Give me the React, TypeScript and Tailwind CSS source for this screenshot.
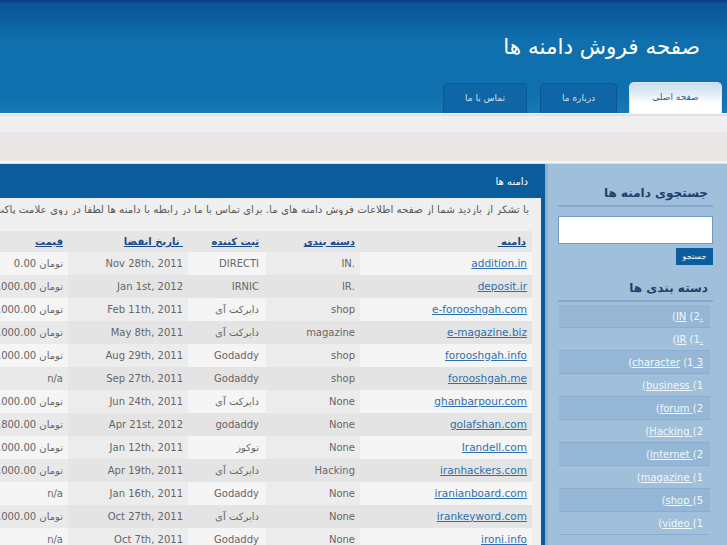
import React from "react";

type Row = [string, string, string, string, string];

const rows: Row[] = [
  ["addition.in", ".IN", "DIRECTI", "Nov 28th, 2011", "تومان 0.00"],
  ["deposit.ir", ".IR", "IRNIC", "Jan 1st, 2012", "تومان 10,000,000.00"],
  ["e-forooshgah.com", "shop", "دایرکت آی", "Feb 11th, 2011", "تومان 2,000,000.00"],
  ["e-magazine.biz", "magazine", "دایرکت آی", "May 8th, 2011", "تومان 3,000,000.00"],
  ["forooshgah.info", "shop", "Godaddy", "Aug 29th, 2011", "تومان 1,000,000.00"],
  ["forooshgah.me", "shop", "Godaddy", "Sep 27th, 2011", "n/a"],
  ["ghanbarpour.com", "None", "دایرکت آی", "Jun 24th, 2011", "تومان 5,000,000.00"],
  ["golafshan.com", "None", "godaddy", "Apr 21st, 2012", "تومان 1,800.00"],
  ["Irandell.com", "None", "توکوز", "Jan 12th, 2011", "تومان 4,000,000.00"],
  ["iranhackers.com", "Hacking", "دایرکت آی", "Apr 19th, 2011", "تومان 6,000,000.00"],
  ["iranianboard.com", "None", "Godaddy", "Jan 16th, 2011", "n/a"],
  ["irankeyword.com", "None", "دایرکت آی", "Oct 27th, 2011", "تومان 8,000,000.00"],
  ["ironi.info", "None", "Godaddy", "Oct 7th, 2011", "n/a"],
];

const cats: { pre: string; link: string; post: string; tail?: string }[] = [
  { pre: "(", link: "IN", post: " (2", tail: "." },
  { pre: "(", link: "IR", post: " (1", tail: "." },
  { pre: "(", link: "character", post: " (1", tail: " 3" },
  { pre: "(", link: "business ", post: "(1" },
  { pre: "(", link: "forum ", post: "(2" },
  { pre: "(", link: "Hacking ", post: "(2" },
  { pre: "(", link: "internet ", post: "(2" },
  { pre: "(", link: "magazine ", post: "(1" },
  { pre: "(", link: "shop ", post: "(5" },
  { pre: "(", link: "video ", post: "(1" },
];

export default function App() {
  return (
    <div
      dir="rtl"
      className="w-[727px] h-[545px] overflow-hidden bg-[#efefef] font-['DejaVu_Sans',sans-serif]"
    >
      {/* Header */}
      <header className="h-[113px] flex flex-col bg-[linear-gradient(to_bottom,#0d3f85_0px,#0d3f85_2px,#0a5798_3px,#0b5c9c_14px,#0e65a5_28px,#1070ad_40px,#1070ad_92px,#1779b5_113px)]">
        <div className="pt-[33px] pr-[27px] text-white text-[21.5px] leading-[28px]">
          صفحه فروش دامنه ها
        </div>
        <nav className="mt-auto flex items-end pr-[5px]">
          <div className="w-[93px] h-[31px] rounded-t-[5px] bg-[linear-gradient(to_bottom,#c9dcec_0%,#e6eff7_40%,#ffffff_65%,#ffffff_100%)] border border-b-0 border-[#dbe7f1] flex items-center justify-center text-[9px] text-[#2d5e8e]">
            صفحه اصلی
          </div>
          <div className="mr-[12px] w-[77px] h-[30px] rounded-t-[5px] bg-[#0f66a6] border border-b-0 border-[#0b5794] flex items-center justify-center text-[9px] text-[#cfe0ef]">
            درباره ما
          </div>
          <div className="mr-[13px] w-[84px] h-[30px] rounded-t-[5px] bg-[#0f66a6] border border-b-0 border-[#0b5794] flex items-center justify-center text-[9px] text-[#cfe0ef]">
            تماس با ما
          </div>
        </nav>
      </header>

      {/* Gray bands */}
      <div className="h-[1px] bg-[#f7f7f7]" />
      <div className="h-[2px] bg-[#e1e1e1]" />
      <div className="h-[16px] bg-[#efefef]" />
      <div className="h-[29px] bg-[#ebe7e6]" />
      <div className="h-[2px] bg-[#f5f5f5]" />
      <div className="h-[1px] bg-[#dcdcdc]" />

      {/* Body */}
      <div className="flex h-[381px]">
        {/* Sidebar */}
        <aside className="w-[182px] shrink-0 bg-[#9fbfda] border-l-[3px] border-[#8db0d0] pl-[10px] pr-[14px]">
          <div className="pt-[22px] pb-[5px] pr-[5px] border-b-2 border-[#84a9cd] text-[12px] leading-[14px] tracking-[1px] font-bold text-[#1f3f6e]">
            جستجوی دامنه ها
          </div>
          <div className="mt-[9px] h-[28px] bg-white border border-[#6f9bc4]" />
          <div className="mt-[4px] w-[37px] h-[17px] bg-[#0b5c9d] text-white text-[8px] flex items-center justify-center">
            جستجو
          </div>
          <div className="mt-[16px] pb-[5px] pr-[5px] border-b-2 border-[#84a9cd] text-[12px] leading-[14px] tracking-[1px] font-bold text-[#1f3f6e]">
            دسته بندی ها
          </div>
          <ul className="mt-[3px] mr-[3px] ml-[1px]">
            {cats.map((c, i) => (
              <li
                key={i}
                className={`h-[23px] border-b border-[#8aaed0] flex items-center pr-[7px] text-[10px] text-[#f2f7fc] ${
                  i % 2 === 0 ? "bg-[#95b7d5]" : ""
                }`}
              >
                <span dir="ltr" className="whitespace-pre">
                  {c.pre}
                  <span className="underline">{c.link}</span>
                  {c.post}
                  {c.tail ? <span className="underline">{c.tail}</span> : null}
                </span>
              </li>
            ))}
          </ul>
        </aside>

        {/* Main panel */}
        <main className="w-[616px] shrink-0 border-r-[4px] border-[#0b5c9d] flex flex-col">
          <div className="h-[34px] shrink-0 bg-[#0b5c9d] flex items-center pr-[13px] text-white text-[10px]">
            دامنه ها
          </div>
          <div className="flex-1 bg-[#efefef] px-[9px]">
            <div className="pt-[5px] pr-[3px] text-[10.3px] leading-[12px] text-[#5a5a5a] whitespace-nowrap overflow-hidden">
              با تشکر از بازدید شما از صفحه اطلاعات فروش دامنه های ما. برای تماس با ما در رابطه با دامنه ها لطفا در روی علامت پاکت کلیک کنید.
            </div>
            <table className="mt-[16px] w-[594px] table-fixed border-collapse text-[10px]">
              <colgroup>
                <col className="w-[172px]" />
                <col className="w-[94px]" />
                <col className="w-[78px]" />
                <col className="w-[120px]" />
                <col className="w-[130px]" />
              </colgroup>
              <thead>
                <tr className="h-[21px] bg-[#e6e6e6]">
                  {["دامنه ", "دسته بندی", "ثبت کننده", " تاریخ انقضا", "قیمت"].map((h, i) => (
                    <th
                      key={i}
                      className={`text-right font-bold p-0 ${i === 2 ? "pr-[7px]" : i === 0 ? "pr-[6px]" : "pr-[5px]"}`}
                    >
                      <span className="underline text-[#1b4a86] whitespace-pre">{h}</span>
                    </th>
                  ))}
                </tr>
              </thead>
              <tbody>
                {rows.map((r, ri) => {
                  const odd = ri % 2 === 0;
                  const bg = (ci: number) =>
                    odd
                      ? ci % 2 === 0
                        ? "bg-[#f5f5f5]"
                        : "bg-[#ececec]"
                      : ci === 4
                      ? "bg-[#e9e9e9]"
                      : "bg-[#e4e4e4]";
                  return (
                    <tr key={ri} className="h-[23px]">
                      <td className={`${bg(0)} text-right pr-[5px] p-0 text-[10.5px] whitespace-nowrap`}>
                        <span className="text-[#2f6fae] underline">{r[0]}</span>
                      </td>
                      <td className={`${bg(1)} text-right pr-[5px] p-0 text-[#666] whitespace-nowrap`}>{r[1]}</td>
                      <td className={`${bg(2)} text-right pr-[7px] p-0 text-[#666] whitespace-nowrap`}>{r[2]}</td>
                      <td className={`${bg(3)} text-right pr-[5px] p-0 text-[#666] whitespace-nowrap`}>{r[3]}</td>
                      <td className={`${bg(4)} text-right pr-[5px] p-0 text-[#666] whitespace-nowrap`}>{r[4]}</td>
                    </tr>
                  );
                })}
              </tbody>
            </table>
          </div>
        </main>
      </div>
    </div>
  );
}
